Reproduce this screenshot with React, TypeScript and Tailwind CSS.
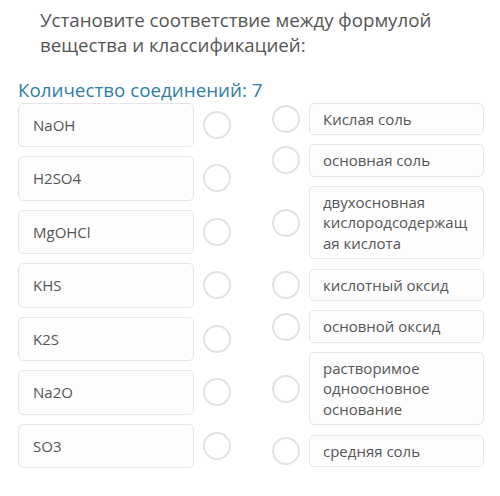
const formulas = ["NaOH", "H2SO4", "MgOHCl", "KHS", "K2S", "Na2O", "SO3"];

const classes = [
  "Кислая соль",
  "основная соль",
  "двухосновная кислородсодержащая кислота",
  "кислотный оксид",
  "основной оксид",
  "растворимое одноосновное основание",
  "средняя соль",
];

function Circle() {
  return <div className="w-[28px] h-[28px] shrink-0 rounded-full border-2 border-[#e2e2e2] bg-white" />;
}

export default function App() {
  return (
    <div className="w-[500px] h-[496px] bg-white font-['Open_Sans',sans-serif] text-[#555]">
      <div className="pl-[40px] pt-[6.5px] w-[450px] text-[18.7px] leading-[25px]">
        Установите соответствие между формулой вещества и классификацией:
      </div>
      <div className="pl-[18px] mt-[21px] text-[18.8px] leading-[24px] text-[#2f7ea3]">
        Количество соединений: 7
      </div>

      <div className="flex pl-[18px] mt-[1px]">
        {/* formulas */}
        <div className="flex flex-col gap-[9px]">
          {formulas.map((f) => (
            <div key={f} className="flex items-center">
              <div className="w-[176px] h-[44.5px] flex items-center px-[14px] rounded-[5px] border border-[#e6e6e6] bg-[#fdfdfd] text-[15px]">
                {f}
              </div>
              <div className="ml-[9px]">
                <Circle />
              </div>
            </div>
          ))}
        </div>

        {/* classifications */}
        <div className="flex flex-col gap-[9.2px] ml-[41px]">
          {classes.map((c) => (
            <div key={c} className="flex items-center">
              <Circle />
              <div className="ml-[9px] w-[175px] px-[13px] py-[5px] rounded-[5px] border border-[#e6e6e6] bg-[#fdfdfd] text-[15px] leading-[20.5px] [overflow-wrap:anywhere]">
                {c}
              </div>
            </div>
          ))}
        </div>
      </div>
    </div>
  );
}
